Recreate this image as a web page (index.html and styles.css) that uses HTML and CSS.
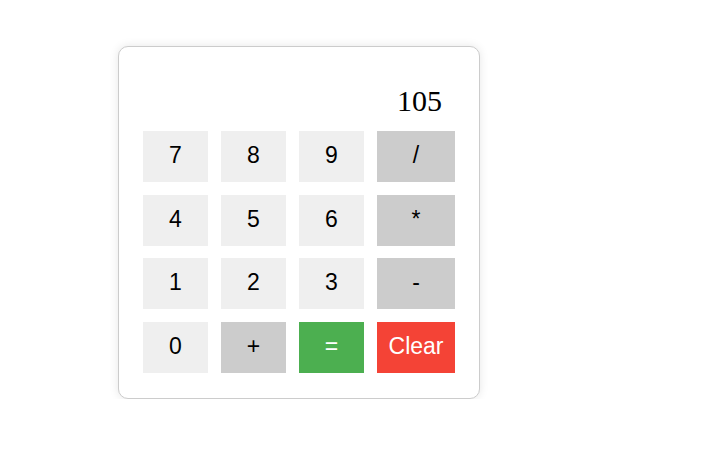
FILE: index.html
```html
<!DOCTYPE html>
<html>
<head>
<meta charset="utf-8">
<link rel="stylesheet" href="styles.css">
</head>
<body>
<div class="calc">
  <div class="display">105</div>
  <div class="keys">
    <button class="key num">7</button>
    <button class="key num">8</button>
    <button class="key num">9</button>
    <button class="key op">/</button>
    <button class="key num">4</button>
    <button class="key num">5</button>
    <button class="key num">6</button>
    <button class="key op">*</button>
    <button class="key num">1</button>
    <button class="key num">2</button>
    <button class="key num">3</button>
    <button class="key op">-</button>
    <button class="key num">0</button>
    <button class="key op">+</button>
    <button class="key eq">=</button>
    <button class="key clear">Clear</button>
  </div>
</div>
</body>
</html>
```
FILE: styles.css
```css
html, body {
  margin: 0;
  padding: 0;
  background: #ffffff;
}
.calc {
  box-sizing: border-box;
  width: 362px;
  margin: 46px 0 0 118px;
  padding: 24px 24px 25px 24px;
  border: 1px solid #cccccc;
  border-radius: 10px;
  box-shadow: 0 0 10px rgba(0, 0, 0, 0.1);
  background: #ffffff;
}
.display {
  font-family: "Liberation Serif", "Times New Roman", serif;
  font-size: 30px;
  line-height: 34px;
  text-align: right;
  padding: 13px 13px 0 0;
  margin-bottom: 13px;
  color: #000;
}
.keys {
  display: grid;
  grid-template-columns: 65px 65px 65px 78px;
  grid-auto-rows: 51px;
  column-gap: 13px;
  row-gap: 12.67px;
}
.key {
  border: none;
  margin: 0;
  padding: 0 0 2px 0;
  font-family: "Liberation Sans", Arial, sans-serif;
  font-size: 23px;
  color: #000;
  display: flex;
  align-items: center;
  justify-content: center;
}
.num { background: #efefef; }
.op { background: #cccccc; }
.eq { background: #4caf50; color: #fff; }
.clear { background: #f44336; color: #fff; }
```
